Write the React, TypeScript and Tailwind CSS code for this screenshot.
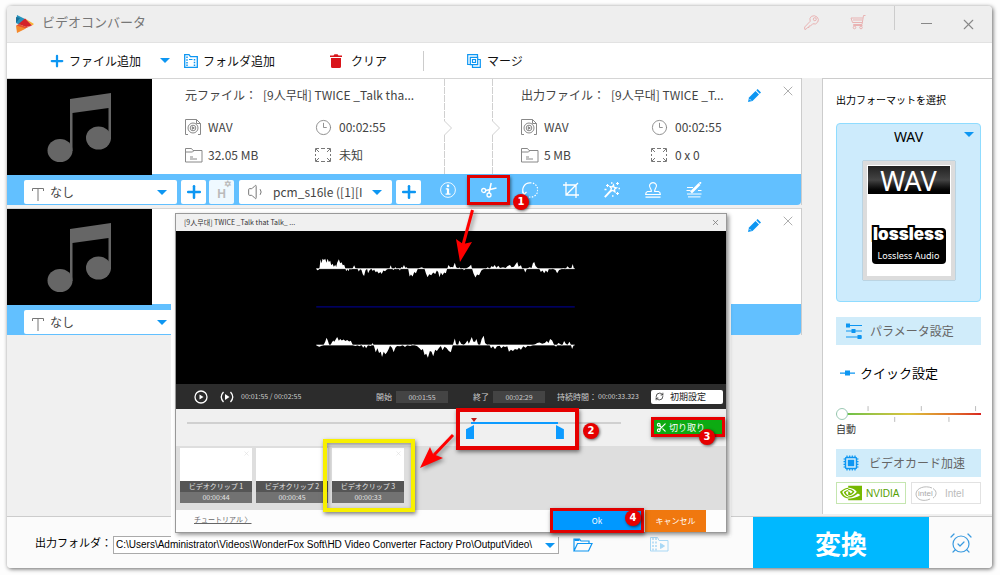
import React, { useState } from 'react';
import { AlarmClockCheck, Clock3, Plus, RefreshCw, Scissors, Volume1, X } from 'lucide-react';
import { SiNvidia } from 'react-icons/si';

interface MediaInfo {
  title: string;
  format: string;
  duration: string;
  size: string;
  resolution: string;
}

interface MediaFile {
  id: string;
  source?: MediaInfo;
  output?: MediaInfo;
}

const files: MediaFile[] = [
  {
    id: 'a',
    source: { title: '[9人무대] TWICE _Talk tha...', format: 'WAV', duration: '00:02:55', size: '32.05 MB', resolution: '未知' },
    output: { title: '[9人무대] TWICE _T...', format: 'WAV', duration: '00:02:55', size: '5 MB', resolution: '0 x 0' }
  },
  { id: 'b' }
];

const clips = [
  { name: 'ビデオクリップ 1', time: '00:00:44' },
  { name: 'ビデオクリップ 2', time: '00:00:45' },
  { name: 'ビデオクリップ 3', time: '00:00:33' }
];

const leftWave =
  '50,38 53,43 57,42 60,34 63,10 66,22 69,8 73,12 77,8 81,20 84,8 88,18 92,14 95,28 99,23 103,32 107,26 110,33 113,20 118,10 122,22 126,19 130,28 134,26 138,38 140,46 144,40 147,46 150,38 155,41 160,36 164,28 168,37 174,38 178,47 182,40 186,42 190,55 194,60 198,44 203,38 206,52 211,42 216,38 220,45 224,41 229,49 233,46 238,53 243,48 247,54 252,44 257,46 263,40 270,38 274,28 278,38 283,42 288,33 292,40 297,36 302,44 306,33 310,35 314,27 318,35 322,34 327,40 331,62 335,56 340,62 345,48 350,52 355,40 360,36 368,34 376,39 380,52 385,64 390,55 396,58 402,50 408,54 413,44 417,48 421,64 425,50 430,58 435,50 440,52 444,38 448,27 453,34 457,33 462,34 467,20 471,34 477,37 481,34 485,40 491,36 494,43 500,38 510,32 516,26 519,38 523,52 529,65 534,56 540,58 547,44 552,40 560,38 566,34 572,38 578,30 582,34 587,27 592,35 598,29 603,36 612,34 620,36 626,30 633,27 638,34 645,32 650,25 655,18 659,32 666,28 670,38 675,39 679,50 684,38 692,34 698,36 702,22 706,18 710,30 716,36 722,40 726,48 731,44 736,52 741,44 746,50 750,39 757,40 762,38 770,42 775,52 781,42 787,40 793,36 800,40 806,31 812,37 818,36 822,24 825,36 828,38';

const rightWave =
  '50,268 55,272 60,273 66,270 72,268 77,258 81,246 85,255 89,268 93,268 97,260 101,254 104,258 108,252 113,244 118,255 122,250 127,254 132,251 138,256 143,253 149,257 154,255 160,268 168,271 174,268 180,272 186,266 191,276 196,270 200,278 206,268 214,271 220,262 224,272 229,290 234,278 239,292 244,288 248,304 253,288 258,296 263,290 268,280 272,270 278,276 283,290 288,276 293,271 303,272 310,268 317,274 324,268 333,271 340,266 346,268 354,272 361,278 366,284 371,280 376,298 381,294 386,306 392,286 397,288 402,302 408,282 413,286 420,276 425,271 430,284 436,273 442,277 449,286 455,290 460,272 463,262 467,248 471,266 477,268 481,254 486,264 494,268 500,262 505,254 509,264 513,256 518,244 523,258 528,258 532,250 537,266 543,268 548,250 554,240 558,262 565,268 571,266 576,278 582,272 588,281 594,272 602,270 607,278 613,272 618,274 625,272 630,288 636,282 642,286 648,280 655,282 660,276 666,282 673,272 680,276 686,270 694,272 702,268 708,266 715,262 722,260 730,264 738,262 744,256 749,262 754,250 760,254 766,268 772,273 778,262 783,264 790,270 796,256 801,264 806,268 812,258 816,266 820,280 825,268 828,268';

const fieldText = 'block appearance-none bg-white text-xs text-[#444] outline-none';

function Caret({ className }: { className?: string }) {
  return (
    <svg viewBox="0 0 10 5" className={`h-[5px] w-2.5 ${className ?? ''}`}>
      <path d="M0 0h10L5 5z" fill="#0d96f2" />
    </svg>
  );
}

function LogoIcon() {
  return (
    <svg viewBox="0 0 18 18" className="h-[18px] w-[18px]">
      <path d="M1 0l9 4.500L4 10 0 8z" fill="#2793bd" />
      <path d="M0 2l4 1-4 5z" fill="#176e96" />
      <path d="M9 3.400L18 9l-2 1.500z" fill="#f9b233" />
      <path d="M9 3.400l7 7-6 1.600-7.500-3z" fill="#d3222a" />
      <path d="M2.500 9l8 3L16 10.500 8 14 0 11z" fill="#e8502d" />
      <path d="M0 10.500l10 3L1 18z" fill="#f58a2c" />
    </svg>
  );
}

function KeyIcon() {
  return (
    <svg viewBox="0 0 15 15" className="h-[15px] w-[15px]" fill="none" stroke="#e9b3b3">
      <path d="M6.200 6.300Q5 3 7.500 1.300 10.500-.2 13 2t.8 5Q12 10 8.700 8.800L6.500 11H5v1.500H3.500L2 14.300H.7V12z" />
      <circle cx="10.800" cy="4.200" r="1.500" />
    </svg>
  );
}

function CartIcon() {
  return (
    <svg viewBox="0 0 16 16" className="h-4 w-4" fill="none" stroke="#e9b3b3">
      <path d="M15.500 1.500h-2l-1.500 9H3.500M12.800 4H1l1.500 4.500h9.700M3 6h9" />
      <path d="M3.500 10.500v1h9" />
      <circle cx="4.500" cy="13.500" r="1.300" />
      <circle cx="11" cy="13.500" r="1.300" />
    </svg>
  );
}

function FolderFilmIcon({ className }: { className?: string }) {
  return (
    <svg viewBox="0 0 14 14" className={className} fill="none" stroke="currentColor">
      <path d="M.7 13.300V.7H5l1.500 2h6.800v10.600z" strokeWidth="1.300" />
      <path d="M3 2.500v10M10.500 5v7.500" strokeWidth="1.500" strokeDasharray="1.500 1.200" />
      <path d="M5 5.500h3.500" />
    </svg>
  );
}

function MergeIcon() {
  return (
    <svg viewBox="0 0 14 14" className="h-3.5 w-3.5" fill="none" stroke="#0d96f2" strokeWidth="1.200">
      <path d="M3 10.500H.7V.7h9.800V3" />
      <path d="M3.300 3.300h7.400v7.400H3.300z" />
      <path d="M5.500 5.500h3v3h-3zM11 5.500h2.300v7.800H5.500V11" />
    </svg>
  );
}

function NoteIcon() {
  return (
    <svg viewBox="0 0 145 96" className="h-24 w-[145px] shrink-0 bg-black" fill="#666">
      <path d="M63 20l41-6v46h-2.500V29L65.500 34v38H63z" />
      <ellipse cx="53" cy="71.500" rx="12.500" ry="11.500" />
      <ellipse cx="91.500" cy="59" rx="12.500" ry="11.500" />
    </svg>
  );
}

function FileIcon() {
  return (
    <svg viewBox="0 0 16 16" className="h-4 w-4" fill="none" stroke="#888">
      <path d="M3 15.500H.5V.5h11l4 4v11H13M11.500.5v4h4" />
      <circle cx="8" cy="9" r="5" />
      <circle cx="8" cy="9" r="2.800" />
      <path d="M7.300 7.700l2 1.300-2 1.300z" fill="#888" />
    </svg>
  );
}

function FolderIcon() {
  return (
    <svg viewBox="0 0 18 16" className="h-4 w-[18px]" fill="none" stroke="#888">
      <path d="M.5 15V1.500h6l1.500 2h9V15zM.5 5h7l1.500-1.500" />
      <path d="M5 10h3M5 12h7" />
    </svg>
  );
}

function ExpandIcon() {
  return (
    <svg viewBox="0 0 16 14" className="h-3.5 w-4" fill="none" stroke="#777">
      <path d="M.5 4V.5H4M12 .5h3.500V4M.5 10v3.500H4M15.500 10v3.500H12" />
      <path d="M1 1l3 3M15 1l-3 3M1 13l3-3M15 13l-3-3" />
      <path d="M6 .5h4M6 13.500h4M.5 6v2M15.500 6v2" />
    </svg>
  );
}

function PencilIcon() {
  return (
    <svg viewBox="0 0 13 13" className="h-[13px] w-[13px]" fill="#0d96f2">
      <path d="M0 13l1-4.500L7.500 2 11 5.500 4.500 12z" />
      <path d="M8.300 1.300L9.600 0 13 3.400l-1.300 1.300z" />
      <path d="M1.500 10l1.500 1.500" stroke="#fff" strokeWidth=".8" />
    </svg>
  );
}

function InfoIcon() {
  return (
    <svg viewBox="0 0 16 16" className="h-4 w-4" fill="none" stroke="#fff">
      <circle cx="8" cy="8" r="7.400" strokeWidth=".9" />
      <path d="M8 6.500v5.500" strokeWidth="2.200" />
      <path d="M5.800 6.800H8M5.500 12.200h5" strokeWidth="1.200" />
      <circle cx="8" cy="3.900" r="1.300" fill="#fff" stroke="none" />
    </svg>
  );
}

function CutIcon() {
  return (
    <svg viewBox="0 0 16 16" className="h-4 w-4" fill="none" stroke="#fff" strokeWidth="1.300">
      <circle cx="2.700" cy="8.500" r="2" />
      <circle cx="8" cy="13" r="2" />
      <path d="M4.700 8.500L15.500 6M8 11L10.200 1" strokeWidth="1.500" />
    </svg>
  );
}

function RotateIcon() {
  return (
    <svg viewBox="0 0 16 16" className="h-4 w-4" fill="none" stroke="#fff" strokeWidth="1.200">
      <path d="M8 .8A7.200 7.200 0 1 1 7 15" strokeDasharray="1.500 1.400" />
      <path d="M8 .8A7.200 7.200 0 0 0 2 12M0 9.500l2 3 2.500-2.500" />
    </svg>
  );
}

function CropIcon() {
  return (
    <svg viewBox="0 0 16 16" className="h-4 w-4" fill="none" stroke="#fff" strokeWidth="1.300">
      <path d="M3 0v13h13M0 3h13v13M15 1L3 13" />
    </svg>
  );
}

function WandIcon() {
  return (
    <svg viewBox="0 0 16 16" className="h-4 w-4" fill="none" stroke="#fff" strokeWidth="1.300">
      <path d="M.8 15.200L7.500 8" strokeWidth="1.900" />
      <path d="M9.500 3l.6 2.400 2.400.4-2 1.500.4 2.500-2-1.400L6.600 9l.8-2.300L6 4.600l2.400.2z" />
      <path d="M3.500 2v3M2 3.500h3M13.500 0v3M12 1.500h3M13.500 10v3M12 11.500h3" strokeWidth="1.100" />
      <path d="M.5 7.500h2M8 14h1.500M14.500 6.500H16M7 1h1.500" />
    </svg>
  );
}

function StampIcon() {
  return (
    <svg viewBox="0 0 16 16" className="h-4 w-4" fill="none" stroke="#fff" strokeWidth="1.200">
      <path d="M6.300 9.500Q6.500 8 5.500 6.500 3.800 4 4.800 2.500 6 .7 8 .7t3.200 1.800q1 1.500-.7 4-1 1.500-.8 3h3.800q1.800.5 1.800 3H.7q0-2.500 1.800-3zM.5 15.200h15" />
    </svg>
  );
}

function EditIcon() {
  return (
    <svg viewBox="0 0 16 16" className="h-4 w-4" fill="none" stroke="#fff">
      <path d="M1 5.500h6M.5 8.500h4M12 8.500h3.500M1 12h14.500M2 14.900h12.500" />
      <path d="M5 10.500L13.500 2" strokeWidth="2.600" />
      <path d="M13.500 1.500l1.500-1.200" strokeWidth="1.800" />
    </svg>
  );
}

function ChevronDivider() {
  return (
    <svg viewBox="0 0 58 96" className="h-24 w-[58px] shrink-0" fill="none" stroke="#d0d0d0">
      <path d="M.5 0v42M.5 56v40M48.500 0v42M48.500 56v40" strokeDasharray="7 1" />
      <path d="M.5 42l7 7-7 7M48.500 42l7 7-7 7" />
    </svg>
  );
}

function ChipIcon() {
  return (
    <svg viewBox="0 0 16 16" className="h-4 w-4" fill="none" stroke="#0d96f2">
      <path d="M4 .5v15M6.700.5v15M9.300.5v15M12 .5v15M.5 4h15M.5 6.700h15M.5 9.300h15M.5 12h15" strokeWidth="1.200" />
      <rect x="2.500" y="2.500" width="11" height="11" rx="1" fill="#d0ecfa" strokeWidth="1.500" />
      <rect x="4.800" y="4.800" width="6.400" height="6.400" fill="#0d96f2" stroke="none" />
    </svg>
  );
}

function Details({ label, data }: { label: string; data: MediaInfo }) {
  return (
    <div className="pt-1.5 text-xs leading-5 whitespace-nowrap text-[#444]">
      <div className="flex gap-1.5">
        <span>{label}</span>
        <span>{data.title}</span>
      </div>
      <div className="mt-3 grid grid-cols-[130px_auto] gap-y-2">
        <div className="flex items-center gap-[7px]"><FileIcon />{data.format}</div>
        <div className="flex items-center gap-[7px]"><Clock3 size={17} strokeWidth={1.3} className="text-[#888]" />{data.duration}</div>
        <div className="flex items-center gap-[5px]"><FolderIcon />{data.size}</div>
        <div className="flex items-center gap-2"><ExpandIcon />{data.resolution}</div>
      </div>
    </div>
  );
}

function SubtitleSelect() {
  return (
    <div className="relative w-[153px] shrink-0">
      <svg viewBox="0 0 12 13" className="absolute top-2 left-2 h-[13px] w-3" fill="none" stroke="#777">
        <path d="M.5 3V.5h11V3M6 .5V13" />
      </svg>
      <select aria-label="字幕" className={`${fieldText} h-6 w-full rounded-xs pl-[26px]`}>
        <option>なし</option>
      </select>
      <Caret className="pointer-events-none absolute top-2.5 right-2.5" />
    </div>
  );
}

function AddButton({ label }: { label: string }) {
  return (
    <button aria-label={label} className="flex h-6 w-[25px] shrink-0 items-center justify-center rounded-xs bg-white text-[#0d96f2]">
      <Plus size={20} strokeWidth={3} />
    </button>
  );
}

function Badge({ n, className }: { n: number; className: string }) {
  return (
    <span className={`absolute z-10 flex h-4 w-4 items-center justify-center rounded-full bg-[#e60000] font-['DejaVu_Sans'] text-[10px] leading-none font-bold text-white shadow-[1px_1px_3px_rgba(0,0,0,0.6)] ${className}`}>
      {n}
    </span>
  );
}

function FileTools() {
  const tools = [
    { label: '情報', icon: <InfoIcon /> },
    { label: 'カット', icon: <CutIcon />, marked: true },
    { label: '回転', icon: <RotateIcon /> },
    { label: 'クロップ', icon: <CropIcon /> },
    { label: 'エフェクト', icon: <WandIcon /> },
    { label: '透かし', icon: <StampIcon /> },
    { label: '字幕編集', icon: <EditIcon /> }
  ];
  return (
    <div className="ml-1.5 flex text-white">
      {tools.map((tool) => (
        <button key={tool.label} aria-label={tool.label} className="relative flex h-7 w-[41px] items-center justify-center">
          {tool.icon}
          {tool.marked && (
            <>
              <span className="absolute -inset-px border-[3px] border-[#e00000] shadow-[1px_2px_3px_rgba(0,0,0,0.5)]" />
              <Badge n={1} className="top-[18px] -right-5" />
            </>
          )}
        </button>
      ))}
    </div>
  );
}

function FileCard({ file }: { file: MediaFile }) {
  return (
    <div className="border-r border-[#ccc]">
      <div className="flex h-24 border-t border-[#d5d5d5] bg-white">
        <NoteIcon />
        {file.source && file.output && (
          <>
            <div className="w-[292px] shrink-0 pl-[33px]"><Details label="元ファイル：" data={file.source} /></div>
            <ChevronDivider />
            <div className="pl-[19px]"><Details label="出力ファイル：" data={file.output} /></div>
          </>
        )}
        <div className="ml-auto flex items-start gap-[19px] pr-[5px]">
          <button aria-label="名前を編集" className="mt-2.5"><PencilIcon /></button>
          <button aria-label="削除" className="mt-1 text-[#999]"><X size={16} strokeWidth={1.2} /></button>
        </div>
      </div>
      <div className="flex h-[31px] items-center rounded-br-sm bg-[#62c0ff] pt-1 pl-[17px]">
        <SubtitleSelect />
        {file.source && (
          <>
            <div className="ml-1 flex gap-[3px]">
              <AddButton label="字幕を追加" />
              <button aria-label="ハード字幕" className="relative flex h-6 w-[25px] items-end justify-center rounded-xs bg-white/90 pb-0.5 font-['Liberation_Sans'] text-xs font-bold text-[#bbb]">
                H
                <span className="absolute top-0 right-0.5 text-[9px] leading-none">✡</span>
              </button>
            </div>
            <div className="relative ml-[5px] w-[153px] shrink-0">
              <Volume1 size={20} strokeWidth={1.2} className="absolute top-0.5 left-2 text-[#777]" />
              <select aria-label="音声トラック" className={`${fieldText} h-6 w-full rounded-xs pr-7 pl-[34px]`}>
                <option>pcm_s16le ([1][I</option>
              </select>
              <Caret className="pointer-events-none absolute top-2.5 right-2.5" />
            </div>
            <div className="ml-1"><AddButton label="音声を追加" /></div>
            <div className="-mt-1"><FileTools /></div>
          </>
        )}
      </div>
    </div>
  );
}

function OutputPanel() {
  const [quality, setQuality] = useState(0);
  return (
    <aside className="mb-0.5 w-[170px] shrink-0 border-t border-l border-[#ccc] bg-white pt-[11px] pr-[11px] pl-[13px]">
      <h2 className="text-[10px] leading-5 whitespace-nowrap text-black">出力フォーマットを選択</h2>
      <button className="relative mt-[13px] flex h-[179px] w-full flex-col items-center rounded border border-[#8fdcff] bg-[#cdebfc] pt-[3px] font-['Noto_Sans'] text-sm leading-5 text-black">
        WAV
        <Caret className="absolute top-2 right-1.5" />
        <span className="mt-3.5 flex h-[119px] w-[92px] flex-col items-center border-4 border-[#dcdcdc] bg-white p-px shadow-[0_0_1px_#666]">
          <span className="flex h-7 w-full items-center justify-center bg-linear-to-b from-[#222] via-[#444] to-black text-[27px] leading-none text-white">WAV</span>
          <span className="relative mt-[34px] h-9 w-[74px] rounded bg-black">
            <span className="absolute -top-1.5 left-0 w-full text-center font-['Inter'] text-[17px] leading-6 font-black text-white [-webkit-text-stroke:4px_black] [paint-order:stroke_fill]">lossless</span>
            <span className="absolute bottom-0 left-0 w-full text-center text-[9px] leading-4 text-white">Lossless Audio</span>
          </span>
        </span>
      </button>
      <button className="mt-[15px] flex h-7 w-full items-center gap-2 bg-[#d0ecfa] pl-2.5 text-xs text-[#666]">
        <svg viewBox="0 0 16 16" className="h-4 w-4" fill="#0d96f2">
          <path d="M0 2h16v1H0zM0 7.500h16v1H0zM0 13.500h16v1H0z" />
          <path d="M0 .5h4v4H0zM5.500 6h4v4h-4zM11.500 12h4v4h-4z" />
        </svg>
        パラメータ設定
      </button>
      <label htmlFor="quality" className="mt-4 flex h-6 items-center gap-[5px] pl-1 text-[13px] text-black">
        <svg viewBox="0 0 15 6" className="h-1.5 w-[15px]" fill="#0d96f2">
          <path d="M0 2.500h15v1.200H0zM5 .5h5v5H5z" />
        </svg>
        クイック設定
      </label>
      <div className="relative mt-5 h-[18px]">
        <svg viewBox="0 0 147 18" className="absolute inset-0 h-[18px] w-full" fill="none" stroke="#bbb">
          <path d="M32.500 1v5M86.500 1v5M141.500 1v5M59.500 12v5M114.500 12v5" />
        </svg>
        <input
          id="quality"
          type="range"
          min={0}
          max={5}
          value={quality}
          onChange={(e) => setQuality(Number(e.target.value))}
          className="absolute top-2 left-0 h-0.5 w-full appearance-none bg-linear-to-r from-[#4cc14c] via-[#d9c23c] to-[#d92020] [&::-webkit-slider-thumb]:h-3 [&::-webkit-slider-thumb]:w-3 [&::-webkit-slider-thumb]:appearance-none [&::-webkit-slider-thumb]:rounded-full [&::-webkit-slider-thumb]:border [&::-webkit-slider-thumb]:border-[#9cc9b4] [&::-webkit-slider-thumb]:bg-white"
        />
      </div>
      <p className="text-[10px] leading-3 text-[#333]">自動</p>
      <button className="mt-3.5 flex h-7 w-full items-center gap-2.5 bg-[#d0ecfa] pl-[7px] text-xs text-[#666]">
        <ChipIcon />
        ビデオカード加速
      </button>
      <div className="mt-[5px] grid grid-cols-2 gap-[5px] font-['Liberation_Sans'] text-[10px]">
        <div className="flex h-[22px] items-center gap-1 border border-[#c5e6b0] pl-[3px] text-[#55a000]">
          <SiNvidia size={22} color="#76b900" className="shrink-0" />
          NVIDIA
        </div>
        <div className="flex h-[22px] items-center gap-2 border border-[#e2e2e2] pl-[3px] text-[#bbb]">
          <svg viewBox="0 0 22 15" className="h-[15px] w-[22px]" fill="none" stroke="#bbb">
            <path d="M17 2C10-1 1 2 1 8s8 8 14 5M18 2.500c5 3 3 8 0 9.500" />
            <text x="3" y="10" fontSize="8" fill="#aaa" stroke="none">intel</text>
          </svg>
          Intel
        </div>
      </div>
    </aside>
  );
}

function ClipTimeline() {
  const [start, setStart] = useState(655);
  const [end, setEnd] = useState(866);
  const thumb =
    'pointer-events-none absolute top-0 left-0 h-[22px] w-full appearance-none bg-transparent [&::-webkit-slider-thumb]:pointer-events-auto [&::-webkit-slider-thumb]:h-3.5 [&::-webkit-slider-thumb]:w-2 [&::-webkit-slider-thumb]:appearance-none [&::-webkit-slider-thumb]:bg-[#0d9bff]';
  return (
    <div className="relative mt-2.5 ml-[11px] h-[22px] w-[434px]">
      <div className="absolute top-[3px] h-0.5 w-full bg-[#d0d0d0]" />
      <div className="absolute top-[3px] h-0.5 bg-[#0d9bff]" style={{ left: `${start / 10}%`, width: `${(end - start) / 10 - 1}%` }} />
      <svg viewBox="0 0 6 4" className="absolute -top-px h-1 w-1.5" fill="#c01818" style={{ left: `${start / 10}%` }}>
        <path d="M0 0h6L3 4z" />
      </svg>
      <input aria-label="開始位置" type="range" max={1000} value={start} onChange={(e) => setStart(Number(e.target.value))} className={`${thumb} mt-0.5 [&::-webkit-slider-thumb]:[clip-path:polygon(100%_0,100%_100%,0_100%,0_30%)]`} />
      <input aria-label="終了位置" type="range" max={1000} value={end} onChange={(e) => setEnd(Number(e.target.value))} className={`${thumb} mt-0.5 [&::-webkit-slider-thumb]:[clip-path:polygon(0_0,100%_30%,100%_100%,0_100%)]`} />
      <span className="absolute -top-[11px] left-[269px] h-[42px] w-[123px] border-4 border-[#e60000] shadow-[1px_2px_4px_rgba(0,0,0,0.5)]" />
      <Badge n={2} className="top-1 left-[396px]" />
    </div>
  );
}

function TrimDialog() {
  return (
    <div role="dialog" aria-label="カット" className="absolute top-[203px] left-[164px] w-[560px] bg-white p-1">
      <div className="relative border border-[#999] bg-white text-[7px] text-[#333] shadow-[2px_2px_4px_rgba(0,0,0,0.4)]">
        <div className="flex h-[17px] items-center justify-between bg-[#f0f0f0] pr-1.5 pl-2">
          <span>[9人무대] TWICE _Talk that Talk_ ...</span>
          <button aria-label="閉じる" className="text-[#777]"><X size={9} strokeWidth={2} /></button>
        </div>
        <div className="flex h-[153px] items-center justify-center bg-black pr-[11px]">
          <svg viewBox="50 0 778 310" className="h-[103px] w-[259px]" fill="#fff">
            <polygon points={leftWave} />
            <path d="M50 38h778M50 268h778" stroke="#fff" strokeWidth="2" />
            <path d="M50 153h778" stroke="#000080" strokeWidth="4" />
            <polygon points={rightWave} />
          </svg>
        </div>
        <div className="flex h-[25px] items-center bg-[#2c2c2c] pl-[18px] text-[#ccc]">
          <button aria-label="再生">
            <svg viewBox="0 0 14 14" className="h-3.5 w-3.5" fill="none" stroke="#fff" strokeWidth="1.300">
              <circle cx="7" cy="7" r="6" />
              <path d="M5.500 4.500L9.500 7l-4 2.500z" fill="#fff" stroke="none" />
            </svg>
          </button>
          <button aria-label="範囲を再生" className="ml-3">
            <svg viewBox="0 0 14 14" className="h-3.5 w-3.5" fill="none" stroke="#fff" strokeWidth="1.300">
              <path d="M3.500 2Q-1 7 3.500 12M10.500 2Q15 7 10.500 12" />
              <path d="M5 4l4.500 3L5 10z" fill="#fff" stroke="none" />
            </svg>
          </button>
          <span className="ml-[7px] w-[135px]">00:01:55 / 00:02:55</span>
          <label htmlFor="start" className="w-5 text-[8px]">開始</label>
          <input id="start" defaultValue="00:01:55" className="h-3 w-[52px] bg-[#444] text-center outline-none" />
          <label htmlFor="end" className="ml-[25px] w-5 text-[8px]">終了</label>
          <input id="end" defaultValue="00:02:29" className="h-3 w-[52px] bg-[#444] text-center outline-none" />
          <span className="ml-3 w-[41px] text-[8px]">持続時間：</span>
          <span>00:00:33.323</span>
          <button className="mr-[3px] ml-auto flex h-3.5 w-[72px] items-center gap-1.5 rounded-xs bg-white pl-1 text-[9px] leading-none text-[#222]">
            <RefreshCw size={9} strokeWidth={2} />
            初期設定
          </button>
        </div>
        <div className="flex h-[37px] items-start justify-between bg-[#f0f0f0]">
          <ClipTimeline />
          <div className="relative mt-2 mr-px">
            <button className="flex h-5 w-[74px] items-center gap-0.5 border-[3px] border-[#e60000] bg-[#0cab12] text-[9px] leading-none text-white shadow-[1px_2px_4px_rgba(0,0,0,0.5)]">
              <Scissors size={11} strokeWidth={2.5} className="ml-0.5" />
              切り取り
            </button>
            <Badge n={3} className="top-3 right-2.5" />
          </div>
        </div>
        <div className="flex h-16 gap-1 bg-[#dedede] pt-0.5 pl-1">
          {clips.map((clip, i) => (
            <div key={clip.name} className="relative h-[55px] w-[72px] text-center leading-[11px] text-[#e4e4e4]">
              <div className="flex h-[33px] justify-end bg-white p-0.5 text-[#ddd]">
                {i !== 1 && <X size={7} />}
              </div>
              <p className="bg-[#555]">{clip.name}</p>
              <p className="bg-[#727272]">{clip.time}</p>
              {i === 2 && <span className="absolute -top-[9px] -left-[9px] h-[73px] w-[92px] border-4 border-[#f8f000] shadow-[1px_2px_4px_rgba(0,0,0,0.5),inset_1px_2px_4px_rgba(0,0,0,0.4)]" />}
            </div>
          ))}
        </div>
        <div className="flex h-[22px] bg-[#fdfdfd] pr-5 pl-[18px]">
          <a href="#tutorial" className="mt-1 text-[#666] underline">チュートリアル 〉</a>
          <div className="relative ml-auto flex gap-1 text-[8px] text-white">
            <button className="h-[22px] w-[88px] bg-[#0098ff]">Ok</button>
            <button className="h-[22px] w-[61px] bg-[#f0780f]">キャンセル</button>
            <span className="absolute -top-0.5 -left-[3px] h-[25px] w-[94px] border-[3px] border-[#e00000] shadow-[1px_2px_4px_rgba(0,0,0,0.5)]" />
            <Badge n={4} className="top-0 left-[72px]" />
          </div>
        </div>
        <svg viewBox="0 0 80 280" className="pointer-events-none absolute -top-1.5 left-[238px] h-[280px] w-20 drop-shadow-[2px_2px_2px_rgba(0,0,0,0.4)]" fill="#f00" stroke="#f00">
          <path d="M58.500 2L49 37" strokeWidth="3" />
          <path d="M46 54l-4-23 7 5 9-2z" strokeWidth="0" />
          <path d="M39 227l-19 20" strokeWidth="3" />
          <path d="M6 260l10-21 3 7 10 4z" strokeWidth="0" />
        </svg>
      </div>
    </div>
  );
}

export default function App() {
  return (
    <div className="flex min-h-screen flex-col bg-[#fdfdfd] pt-1.5 pr-2 pb-[7px] pl-[7px] font-['Noto_Sans_CJK_JP',sans-serif]">
      <div className="relative flex flex-1 flex-col rounded-sm bg-[#f0f0f0] shadow-[1px_1px_4px_rgba(0,0,0,0.6)]">
        {/* Title bar */}
        <header className="flex h-[37px] items-center rounded-t-sm border-b border-[#e2e2e2] bg-[#eee] pl-[9px]">
          <LogoIcon />
          <h1 className="ml-2 pb-1 text-[13px] text-[#777]">ビデオコンバータ</h1>
          <div className="ml-auto flex h-full items-center pb-1 text-[#888]">
            <button aria-label="登録"><KeyIcon /></button>
            <button aria-label="購入" className="ml-[31px]"><CartIcon /></button>
            <span className="mr-[26px] ml-7 h-6 self-start border-l border-[#ccc]" />
            <button aria-label="最小化">
              <svg viewBox="0 0 11 11" className="h-[11px] w-[11px]" stroke="currentColor"><path d="M0 6.500h11" /></svg>
            </button>
            <button aria-label="閉じる" className="mt-1 mr-[15px] ml-7"><X size={17} strokeWidth={1.6} /></button>
          </div>
        </header>

        {/* Toolbar */}
        <nav className="flex h-[35px] items-center bg-white pl-[41px] text-xs text-[#111]">
          <button className="flex items-center gap-[3px]"><Plus size={18} strokeWidth={3} className="text-[#0d96f2]" />ファイル追加</button>
          <button aria-label="その他の追加方法" className="ml-[19px]"><Caret /></button>
          <button className="ml-3.5 flex items-center gap-[5px]"><FolderFilmIcon className="h-3.5 w-3.5 text-[#0d96f2]" />フォルダ追加</button>
          <button className="ml-[55px] flex items-center gap-[9px]">
            <svg viewBox="0 0 12 14" className="h-3.5 w-3" fill="#d9151b">
              <path d="M0 1.500h3.500L4.500.3h3l1 1.200H12V3H0zM1 4h10v8.500q0 1.500-1.500 1.500h-7Q1 14 1 12.500z" />
            </svg>
            クリア
          </button>
          <span className="ml-9 h-5 border-l border-[#ccc]" />
          <button className="ml-[43px] flex items-center gap-1.5"><MergeIcon />マージ</button>
        </nav>

        <main className="flex flex-1">
          <section className="flex flex-1 flex-col gap-[3px] pr-5">
            {files.map((file) => (
              <FileCard key={file.id} file={file} />
            ))}
          </section>
          <OutputPanel />
        </main>

        {/* Output folder and convert */}
        <footer className="flex h-[52px] items-center rounded-b-sm border-t border-[#ccc] bg-[#fbfbfb] pl-7">
          <label htmlFor="folder" className="w-[78px] shrink-0 text-[11px] whitespace-nowrap text-black">出力フォルダ：</label>
          <div className="relative mt-1 w-[446px] shrink-0">
            <select id="folder" className="block h-[18px] w-full appearance-none border border-[#aaa] bg-white pr-5 pl-0.5 font-['Liberation_Sans'] text-[10px] leading-4 text-black outline-none">
              <option>C:\Users\Administrator\Videos\WonderFox Soft\HD Video Converter Factory Pro\OutputVideo\</option>
            </select>
            <Caret className="pointer-events-none absolute top-[7px] right-1" />
          </div>
          <button aria-label="フォルダを開く" className="mt-1 ml-3.5">
            <svg viewBox="0 0 20 14" className="h-3.5 w-5" fill="none" stroke="#0d96f2" strokeWidth="1.200">
              <path d="M1 13V1h5.500l1.500 2h8v2.500M1 13L4.500 5.500H19L15.500 13z" />
              <path d="M1.500 2h5" strokeWidth="2" />
            </svg>
          </button>
          <button aria-label="出力ファイル" className="mt-1 ml-[57px]">
            <svg viewBox="0 0 19 15" className="h-[15px] w-[19px]" fill="none" stroke="#a9d8f5">
              <path d="M.5 14V.5h7l1.500 3h9V14z" />
              <path d="M3 1v13M6 1v13" strokeDasharray="2 1.500" strokeWidth="1.500" />
              <path d="M10.500 6.500l4 2.500-4 2.500z" fill="#a9d8f5" />
            </svg>
          </button>
          <button className="ml-auto h-full w-44 bg-[#00b8ff] text-[26px] leading-none font-bold text-white">変換</button>
          <button aria-label="スケジュール" className="flex w-[63px] justify-center text-[#3a9be0]"><AlarmClockCheck size={24} strokeWidth={1.2} /></button>
        </footer>

        <TrimDialog />
      </div>
    </div>
  );
}
